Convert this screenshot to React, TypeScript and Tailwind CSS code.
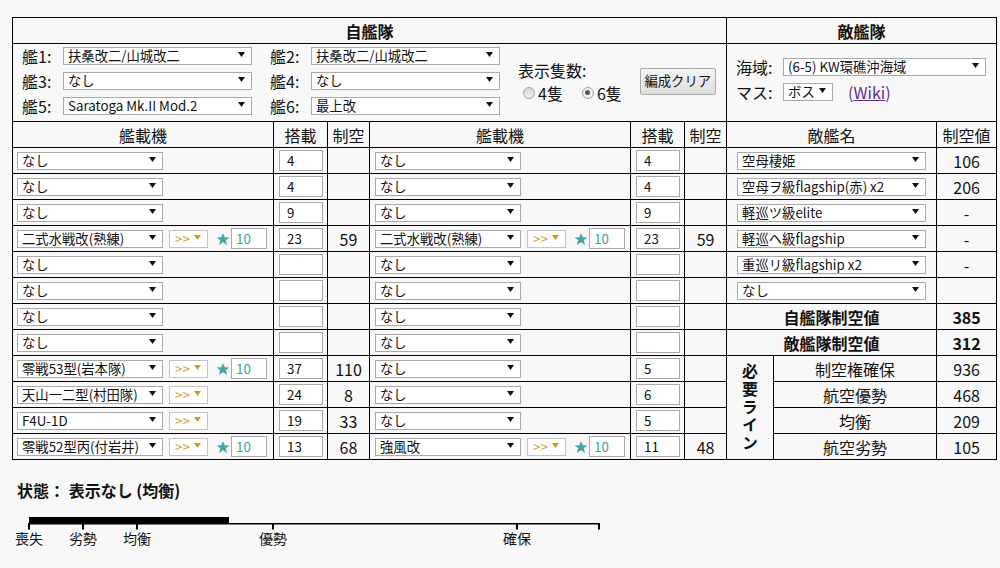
import clsx from 'clsx';

type Slot = { name: string; count: string; air?: string; prof?: boolean; star?: boolean };

const none = (count = ''): Slot => ({ name: 'なし', count });

const leftSlots: Slot[] = [
  none('4'),
  none('4'),
  none('9'),
  { name: '二式水戦改(熟練)', count: '23', air: '59', prof: true, star: true },
  none(),
  none(),
  none(),
  none(),
  { name: '零戦53型(岩本隊)', count: '37', air: '110', prof: true, star: true },
  { name: '天山一二型(村田隊)', count: '24', air: '8', prof: true },
  { name: 'F4U-1D', count: '19', air: '33', prof: true },
  { name: '零戦52型丙(付岩井)', count: '13', air: '68', prof: true, star: true },
];

const rightSlots: Slot[] = [
  none('4'),
  none('4'),
  none('9'),
  { name: '二式水戦改(熟練)', count: '23', air: '59', prof: true, star: true },
  none(),
  none(),
  none(),
  none(),
  none('5'),
  none('6'),
  none('5'),
  { name: '強風改', count: '11', air: '48', prof: true, star: true },
];

const enemies = [
  { name: '空母棲姫', air: '106' },
  { name: '空母ヲ級flagship(赤) x2', air: '206' },
  { name: '軽巡ツ級elite', air: '-' },
  { name: '軽巡ヘ級flagship', air: '-' },
  { name: '重巡リ級flagship x2', air: '-' },
  { name: 'なし', air: '' },
];

const lines = [
  { label: '制空権確保', value: '936' },
  { label: '航空優勢', value: '468' },
  { label: '均衡', value: '209' },
  { label: '航空劣勢', value: '105' },
];

const ticks = [
  { x: 29, label: '喪失' },
  { x: 83, label: '劣勢' },
  { x: 137, label: '均衡' },
  { x: 273, label: '優勢' },
  { x: 517, label: '確保' },
  { x: 599, label: '' },
];

const cell = 'border border-black p-0';

function Arrow({ color = '#111' }: { color?: string }) {
  return (
    <svg width="7" height="5" viewBox="0 0 7 5" className="mb-[3px] shrink-0">
      <polygon points="0,0 7,0 3.5,5" fill={color} />
    </svg>
  );
}

function Select({ value, className }: { value: string; className: string }) {
  return (
    <div
      className={clsx(
        'flex h-[18px] shrink-0 items-center justify-between border border-[#a9a9a9] bg-white pl-[4px] pr-[6px] text-[13.33px] leading-[16px]',
        className,
      )}
    >
      <span className="whitespace-nowrap">{value}</span>
      <Arrow />
    </div>
  );
}

function Star() {
  return (
    <svg width="14" height="14" viewBox="0 0 24 24" className="shrink-0">
      <polygon
        points="12,1.5 15,9 23,9.3 16.8,14.3 19,22.2 12,17.6 5,22.2 7.2,14.3 1,9.3 9,9"
        fill="#45a7a7"
      />
    </svg>
  );
}

function Equip({ slot, pad }: { slot: Slot; pad: string }) {
  return (
    <div className={clsx('flex items-center', pad)}>
      <Select value={slot.name} className="w-[146px]" />
      {slot.prof && (
        <div className="ml-[6px] flex h-[18px] w-[39px] items-center justify-between border border-[#c4c4c4] bg-white pl-[5px] pr-[6px] text-[13.33px] leading-[16px] text-[#e39a2e]">
          <span>&gt;&gt;</span>
          <Arrow color="#d49a12" />
        </div>
      )}
      {slot.star && (
        <>
          <span className="ml-[8px]">
            <Star />
          </span>
          <div className="ml-[1px] flex h-[21px] w-[36px] items-center border border-[#a9a9a9] bg-white pl-[4px] text-[13.33px] text-[#3e9e9e]">
            10
          </div>
        </>
      )}
    </div>
  );
}

function Count({ value }: { value: string }) {
  return (
    <div className="ml-[5px] flex h-[21px] w-[44px] items-center border border-[#a9a9a9] bg-white pl-[7px] text-[13.33px]">
      {value}
    </div>
  );
}

function Radio({ checked }: { checked?: boolean }) {
  return (
    <span
      className={clsx(
        'flex h-[12px] w-[12px] items-center justify-center rounded-full border border-[#a3a3a3]',
        checked ? 'bg-[#f2f2f2]' : 'bg-gradient-to-b from-[#d9d9d9] to-[#f0f0f0]',
      )}
    >
      {checked && <span className="h-[5px] w-[5px] rounded-full bg-[#555]" />}
    </span>
  );
}

function ShipRow({ no, name }: { no: number; name: string }) {
  return (
    <div className="flex h-[18px] items-center">
      <span className="w-[41px] leading-[18px]">艦{no}:</span>
      <Select value={name} className="w-[189px]" />
    </div>
  );
}

export default function App() {
  return (
    <div className="min-h-[568px] bg-[#f8f8f8] pl-[12px] pt-[17px] font-['Noto_Sans_CJK_JP','Noto_Sans',sans-serif] text-[16px] text-[#111]">
      <table className="w-[985px] table-fixed border-collapse">
        <colgroup>
          <col className="w-[261px]" />
          <col className="w-[54px]" />
          <col className="w-[42px]" />
          <col className="w-[261px]" />
          <col className="w-[54px]" />
          <col className="w-[42px]" />
          <col className="w-[47px]" />
          <col className="w-[163px]" />
          <col className="w-[60px]" />
        </colgroup>
        <tbody>
          <tr className="h-[26px]">
            <td colSpan={6} className={clsx(cell, 'text-center font-bold')}>
              自艦隊
            </td>
            <td colSpan={3} className={clsx(cell, 'text-center font-bold')}>
              敵艦隊
            </td>
          </tr>
          <tr className="h-[78px]">
            <td colSpan={6} className={clsx(cell, 'align-top')}>
              <div className="flex items-center pl-[9px] pt-[3px]">
                <div className="flex flex-col gap-[7px]">
                  <ShipRow no={1} name="扶桑改二/山城改二" />
                  <ShipRow no={3} name="なし" />
                  <ShipRow no={5} name="Saratoga Mk.II Mod.2" />
                </div>
                <div className="ml-[18px] flex flex-col gap-[7px]">
                  <ShipRow no={2} name="扶桑改二/山城改二" />
                  <ShipRow no={4} name="なし" />
                  <ShipRow no={6} name="最上改" />
                </div>
                <div className="ml-[18px] flex flex-col gap-[1px]">
                  <span className="leading-[22px]">表示隻数:</span>
                  <div className="flex items-center pl-[5px] leading-[22px]">
                    <Radio />
                    <span className="ml-[3px]">4隻</span>
                    <span className="ml-[19px]">
                      <Radio checked />
                    </span>
                    <span className="ml-[3px]">6隻</span>
                  </div>
                </div>
                <button className="ml-[18px] h-[27px] w-[76px] rounded-[2px] border border-[#acacac] bg-gradient-to-b from-[#f4f4f4] to-[#dedede] text-[13.33px]">
                  編成クリア
                </button>
              </div>
            </td>
            <td colSpan={3} className={clsx(cell, 'align-top')}>
              <div className="flex flex-col gap-[7px] pl-[9px] pt-[14px]">
                <div className="flex h-[18px] items-center">
                  <span className="w-[47px] leading-[18px]">海域:</span>
                  <Select value="(6-5) KW環礁沖海域" className="w-[203px]" />
                </div>
                <div className="flex h-[18px] items-center">
                  <span className="w-[47px] leading-[18px]">マス:</span>
                  <Select value="ボス" className="w-[50px]" />
                  <span className="ml-[15px] leading-[18px] text-[#5b2d91]">
                    (<span className="underline">Wiki</span>)
                  </span>
                </div>
              </div>
            </td>
          </tr>
          <tr className="h-[26px] text-center">
            <td className={cell}>艦載機</td>
            <td className={cell}>搭載</td>
            <td className={cell}>制空</td>
            <td className={cell}>艦載機</td>
            <td className={cell}>搭載</td>
            <td className={cell}>制空</td>
            <td colSpan={2} className={cell}>
              敵艦名
            </td>
            <td className={cell}>制空値</td>
          </tr>
          {leftSlots.map((l, i) => {
            const r = rightSlots[i];
            return (
              <tr key={i} className="h-[26px]">
                <td className={cell}>
                  <Equip slot={l} pad="pl-[4px]" />
                </td>
                <td className={cell}>
                  <Count value={l.count} />
                </td>
                <td className={clsx(cell, 'text-center')}>{l.air}</td>
                <td className={cell}>
                  <Equip slot={r} pad="pl-[5px]" />
                </td>
                <td className={cell}>
                  <Count value={r.count} />
                </td>
                <td className={clsx(cell, 'text-center')}>{r.air}</td>
                {i < 6 && (
                  <>
                    <td colSpan={2} className={cell}>
                      <div className="pl-[10px]">
                        <Select value={enemies[i].name} className="w-[189px]" />
                      </div>
                    </td>
                    <td className={clsx(cell, 'text-center')}>{enemies[i].air}</td>
                  </>
                )}
                {i === 6 && (
                  <>
                    <td colSpan={2} className={clsx(cell, 'text-center font-bold')}>
                      自艦隊制空値
                    </td>
                    <td className={clsx(cell, 'text-center font-bold')}>385</td>
                  </>
                )}
                {i === 7 && (
                  <>
                    <td colSpan={2} className={clsx(cell, 'text-center font-bold')}>
                      敵艦隊制空値
                    </td>
                    <td className={clsx(cell, 'text-center font-bold')}>312</td>
                  </>
                )}
                {i >= 8 && (
                  <>
                    {i === 8 && (
                      <td rowSpan={4} className={cell}>
                        <div className="flex justify-center">
                          <span className="font-bold leading-[20px] tracking-[2px] [writing-mode:vertical-rl]">
                            必要ライン
                          </span>
                        </div>
                      </td>
                    )}
                    <td className={clsx(cell, 'text-center')}>{lines[i - 8].label}</td>
                    <td className={clsx(cell, 'text-center')}>{lines[i - 8].value}</td>
                  </>
                )}
              </tr>
            );
          })}
        </tbody>
      </table>

      <div className="mt-[18px] pl-[5px] font-bold leading-[24px]">状態： 表示なし (均衡)</div>

      <div className="relative ml-[-12px] mt-[15px] h-[40px] w-[620px]">
        <svg width="620" height="16" className="absolute left-0 top-0">
          <rect x="29" y="0" width="200" height="7" fill="#000" />
          <rect x="29" y="6" width="571" height="1.5" fill="#000" />
          {ticks.map((t) => (
            <rect key={t.x} x={t.x - 1} y="6" width="2" height="6.5" fill="#000" />
          ))}
        </svg>
        {ticks.map((t) => (
          <span
            key={t.x}
            className="absolute top-[11px] -translate-x-1/2 text-[14px] leading-[20px]"
            style={{ left: t.x }}
          >
            {t.label}
          </span>
        ))}
      </div>
    </div>
  );
}
